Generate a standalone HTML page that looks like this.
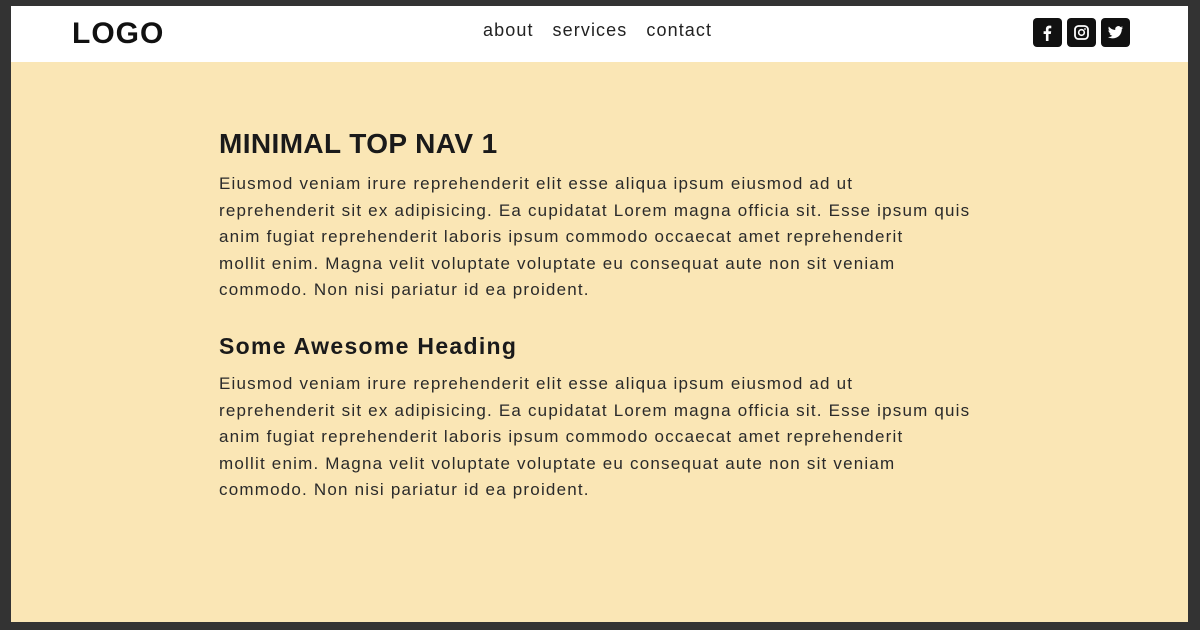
<!DOCTYPE html>
<html><head><meta charset="utf-8"><style>
*{margin:0;padding:0;box-sizing:border-box}
html,body{width:1200px;height:630px;overflow:hidden;background:#333}
body{font-family:"Liberation Sans",sans-serif;color:#1a1a1a;position:relative}
.page{position:absolute;left:11px;top:6px;width:1177px;height:616px;background:#fae6b5}
header{position:absolute;left:0;top:0;width:100%;height:56px;background:#fff}
.logo{position:absolute;left:61px;top:11px;font-weight:bold;font-size:30px;letter-spacing:1px;color:#111}
nav{position:absolute;left:472px;top:14px;font-size:18px;color:#222;letter-spacing:1.1px;white-space:nowrap}
nav span{margin-right:19px}
.ic{position:absolute;top:12px;width:29px;height:29px;background:#111;border-radius:4px}
.ic svg{position:absolute;left:0;top:0}
h1{position:absolute;left:208px;top:122px;font-size:28px;font-weight:bold;letter-spacing:0.4px;color:#1a1a1a}
h2{position:absolute;left:208px;top:327px;font-size:23px;font-weight:bold;letter-spacing:1.3px;color:#1a1a1a}
p{position:absolute;left:208px;font-size:17px;line-height:26.6px;letter-spacing:1.2px;color:#2a2a2a;white-space:nowrap}
</style></head><body>
<div class="page">
<header>
<div class="logo">LOGO</div>
<nav><span>about</span><span>services</span><span>contact</span></nav>
<div class="ic" style="left:1022px"><svg width="29" height="29"><path d="M15.5 23v-7h2.3l.4-2.8h-2.7v-1.7c0-.8.3-1.3 1.4-1.3h1.4V7.7c-.3 0-1.1-.1-2-.1-2 0-3.4 1.2-3.4 3.5v2.1h-2.3V16h2.3v7z" fill="#fff"/></svg></div>
<div class="ic" style="left:1056px"><svg width="29" height="29"><rect x="8" y="8" width="13" height="13" rx="3.5" fill="none" stroke="#fff" stroke-width="1.8"/><circle cx="14.5" cy="14.5" r="2.8" fill="none" stroke="#fff" stroke-width="1.6"/><circle cx="18" cy="11" r=".9" fill="#fff"/></svg></div>
<div class="ic" style="left:1090px"><svg width="29" height="29"><path d="M22 9.5c-.6.3-1.2.4-1.8.5.7-.4 1.1-1 1.4-1.7-.6.4-1.3.6-2 .8a3.1 3.1 0 0 0-5.3 2.8c-2.6-.1-4.9-1.4-6.4-3.3-.8 1.4-.4 3.2.9 4.1-.5 0-1-.2-1.4-.4 0 1.5 1.1 2.8 2.5 3.1-.5.1-.9.2-1.4.1.4 1.2 1.6 2.1 2.9 2.2A6.3 6.3 0 0 1 7 19c1.4.9 3 1.4 4.8 1.4 5.8 0 9-4.8 9-9v-.4c.5-.4 1-.9 1.2-1.5z" fill="#fff"/></svg></div>
</header>
<h1>MINIMAL TOP NAV 1</h1>
<p style="top:165px">Eiusmod veniam irure reprehenderit elit esse aliqua ipsum eiusmod ad ut<br>reprehenderit sit ex adipisicing. Ea cupidatat Lorem magna officia sit. Esse ipsum quis<br>anim fugiat reprehenderit laboris ipsum commodo occaecat amet reprehenderit<br>mollit enim. Magna velit voluptate voluptate eu consequat aute non sit veniam<br>commodo. Non nisi pariatur id ea proident.</p>
<h2>Some Awesome Heading</h2>
<p style="top:365px">Eiusmod veniam irure reprehenderit elit esse aliqua ipsum eiusmod ad ut<br>reprehenderit sit ex adipisicing. Ea cupidatat Lorem magna officia sit. Esse ipsum quis<br>anim fugiat reprehenderit laboris ipsum commodo occaecat amet reprehenderit<br>mollit enim. Magna velit voluptate voluptate eu consequat aute non sit veniam<br>commodo. Non nisi pariatur id ea proident.</p>
</div>
</body></html>
